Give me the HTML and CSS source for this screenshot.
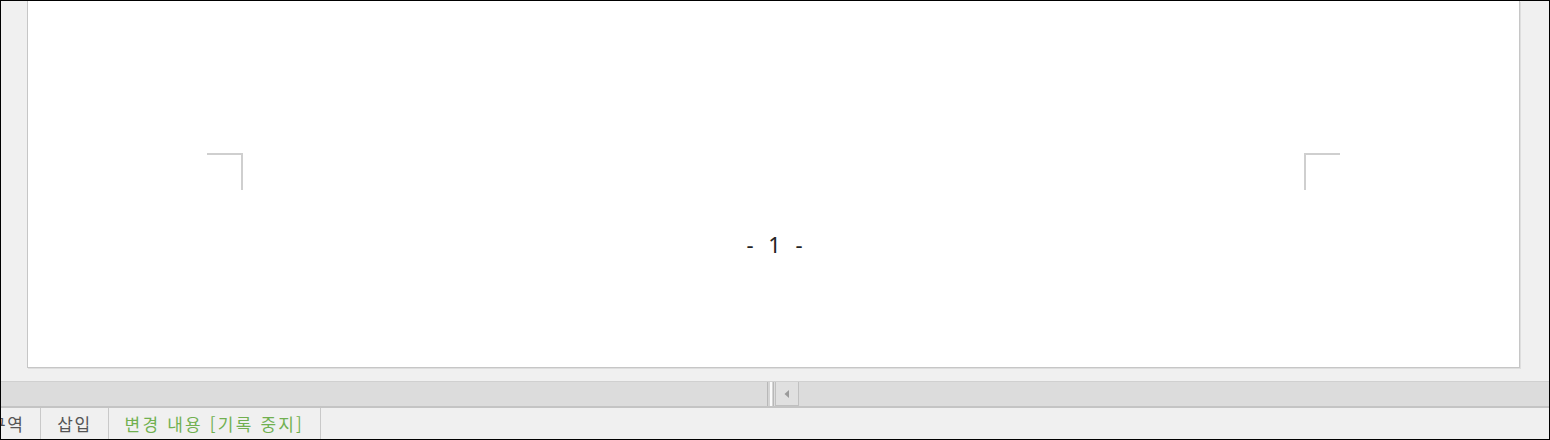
FILE: index.html
```html
<!DOCTYPE html>
<html lang="ko">
<head>
    <meta charset="UTF-8">
    <title>문서 - 페이지 보기</title>
    <link rel="stylesheet" href="styles.css">
</head>
<body>
    <div class="app">
        <div class="workspace">
            <div class="page">
                <div class="crop-marks">
                    <div class="crop crop-left"></div>
                    <div class="crop crop-right"></div>
                </div>
                <div class="page-number">- 1 -</div>
            </div>
        </div>

        <div class="hscroll">
            <div class="hscroll-track track-left"></div>
            <div class="hscroll-split"></div>
            <div class="hscroll-btn">
                <svg width="8" height="10" viewBox="0 0 8 10"><path d="M6 1 L1.5 5 L6 9 Z" fill="#9a9a9a"/></svg>
            </div>
            <div class="hscroll-track"></div>
        </div>

        <div class="statusbar">
            <div class="status-item status-cut">구역</div>
            <div class="status-item">삽입</div>
            <div class="status-item status-track">변경 내용 [기록 중지]</div>
        </div>
    </div>
</body>
</html>
```

FILE: styles.css
```css
* {
    box-sizing: border-box;
}

html, body {
    margin: 0;
    padding: 0;
    width: 1550px;
    height: 440px;
    overflow: hidden;
    font-family: "Noto Sans CJK KR", "Noto Sans", sans-serif;
}

.app {
    display: flex;
    flex-direction: column;
    width: 1550px;
    height: 440px;
    border: 1px solid #000;
    background-color: #f0f0f0;
}

.workspace {
    flex: 1;
    padding-left: 26px;
    padding-right: 29px;
    padding-bottom: 13px;
    background-color: #f0f0f0;
}

.page {
    display: flex;
    flex-direction: column;
    align-items: center;
    height: 100%;
    background-color: #fff;
    border: 1px solid #c6c6c6;
    border-top: none;
    box-shadow: 1px 1px 0 #dedede;
}

.crop-marks {
    display: flex;
    justify-content: space-between;
    width: 100%;
    padding: 152px 179px 0 179px;
}

.crop {
    width: 36px;
    height: 37px;
    border-top: 2px solid #cfcfcf;
}

.crop-left {
    border-right: 2px solid #cfcfcf;
}

.crop-right {
    border-left: 2px solid #cfcfcf;
}

.page-number {
    margin-top: 39px;
    font-family: "Noto Sans", "Open Sans", sans-serif;
    font-size: 22px;
    line-height: 30px;
    color: #222;
    word-spacing: 9px;
    padding-left: 2px;
}

.hscroll {
    display: flex;
    height: 27px;
    background-color: #dcdcdc;
    border-top: 1px solid #d0d0d0;
    border-bottom: 2px solid #c4c4c4;
}

.hscroll-track {
    flex: 1;
}

.track-left {
    flex: none;
    width: 766px;
}

.hscroll-split {
    width: 7px;
    margin-right: 1px;
    border: 1px solid #b8b8b8;
    border-top: none;
    border-bottom: none;
    background: linear-gradient(to right, #d4d4d4 0, #d4d4d4 2px, #fafafa 2px, #fafafa 4px, #d4d4d4 4px);
}

.hscroll-btn {
    display: flex;
    align-items: center;
    justify-content: center;
    width: 24px;
    border: 1px solid #c0c0c0;
    border-top: none;
    background-color: #e0e0e0;
}

.statusbar {
    display: flex;
    height: 31px;
    background-color: #f0f0f0;
    overflow: hidden;
}

.status-item {
    display: flex;
    align-items: center;
    padding: 0 16px 0 16px;
    font-size: 17px;
    letter-spacing: 1.5px;
    color: #555;
    border-right: 1px solid #c9c9c9;
    white-space: nowrap;
}

.status-cut {
    margin-left: -11px;
    padding-left: 0;
}

.status-track {
    letter-spacing: 2.2px;
    color: #71b050;
}
```
